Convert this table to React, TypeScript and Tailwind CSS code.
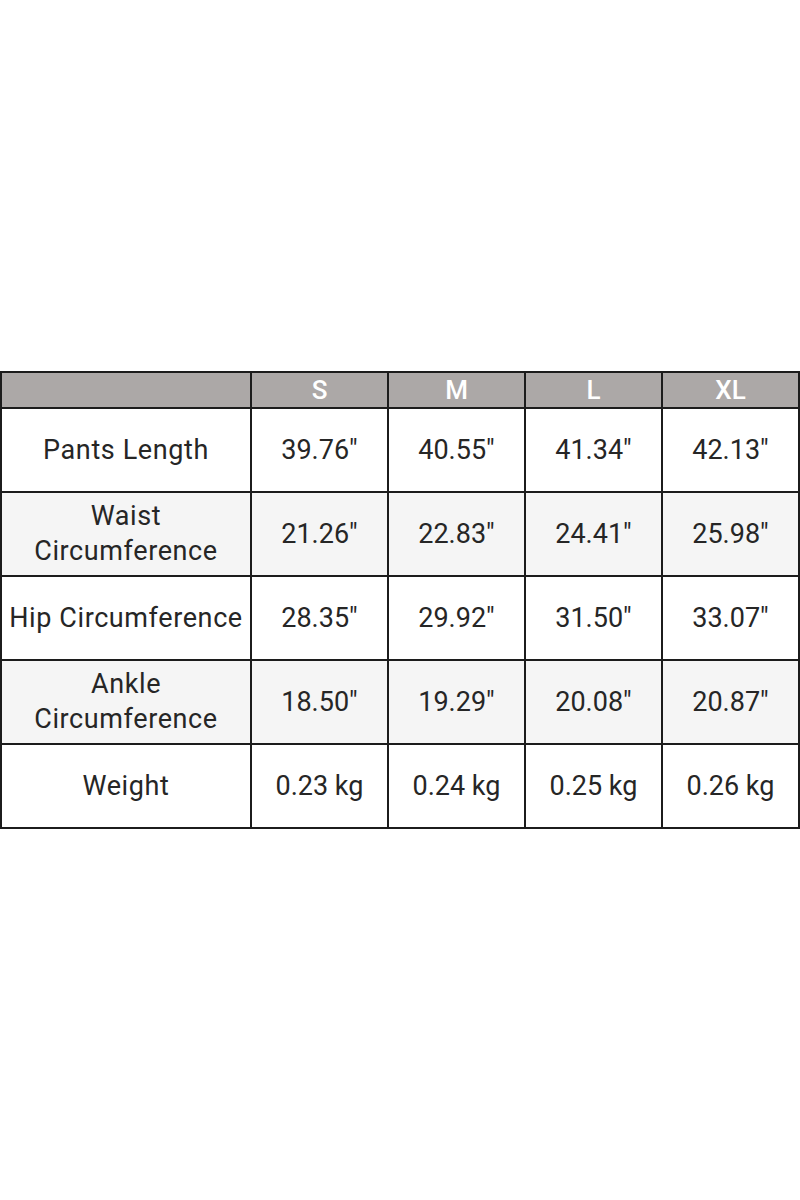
import React from 'react';

const sizes = ['S', 'M', 'L', 'XL'];

const rows: { label: string[]; values: string[] }[] = [
  { label: ['Pants Length'], values: ['39.76"', '40.55"', '41.34"', '42.13"'] },
  { label: ['Waist', 'Circumference'], values: ['21.26"', '22.83"', '24.41"', '25.98"'] },
  { label: ['Hip Circumference'], values: ['28.35"', '29.92"', '31.50"', '33.07"'] },
  { label: ['Ankle', 'Circumference'], values: ['18.50"', '19.29"', '20.08"', '20.87"'] },
  { label: ['Weight'], values: ['0.23 kg', '0.24 kg', '0.25 kg', '0.26 kg'] },
];

export default function App() {
  return (
    <div className="w-[800px] h-[1200px] bg-white flex items-center font-['Roboto',sans-serif]">
      <table className="w-[800px] border-collapse table-fixed text-[#262626]">
        <colgroup>
          <col className="w-[250px]" />
          <col className="w-[137px]" />
          <col className="w-[137px]" />
          <col className="w-[137px]" />
          <col className="w-[137px]" />
        </colgroup>
        <thead>
          <tr className="bg-[#aca8a7] h-[36px]">
            <th className="border-2 border-[#1c1c1c]"></th>
            {sizes.map((s) => (
              <th key={s} className="border-2 border-[#1c1c1c] text-white text-[26px] font-medium leading-none">
                {s}
              </th>
            ))}
          </tr>
        </thead>
        <tbody>
          {rows.map((r, i) => (
            <tr key={i} className={i % 2 === 1 ? 'bg-[#f5f5f5] h-[84px]' : 'bg-white h-[84px]'}>
              <td className="border-2 border-[#1c1c1c] text-center text-[27px] tracking-[0.6px] leading-[35px] px-0 whitespace-nowrap">
                {r.label.map((l) => (
                  <div key={l}>{l}</div>
                ))}
              </td>
              {r.values.map((v) => (
                <td key={v} className="border-2 border-[#1c1c1c] text-center text-[27px] whitespace-nowrap">
                  {v}
                </td>
              ))}
            </tr>
          ))}
        </tbody>
      </table>
    </div>
  );
}
